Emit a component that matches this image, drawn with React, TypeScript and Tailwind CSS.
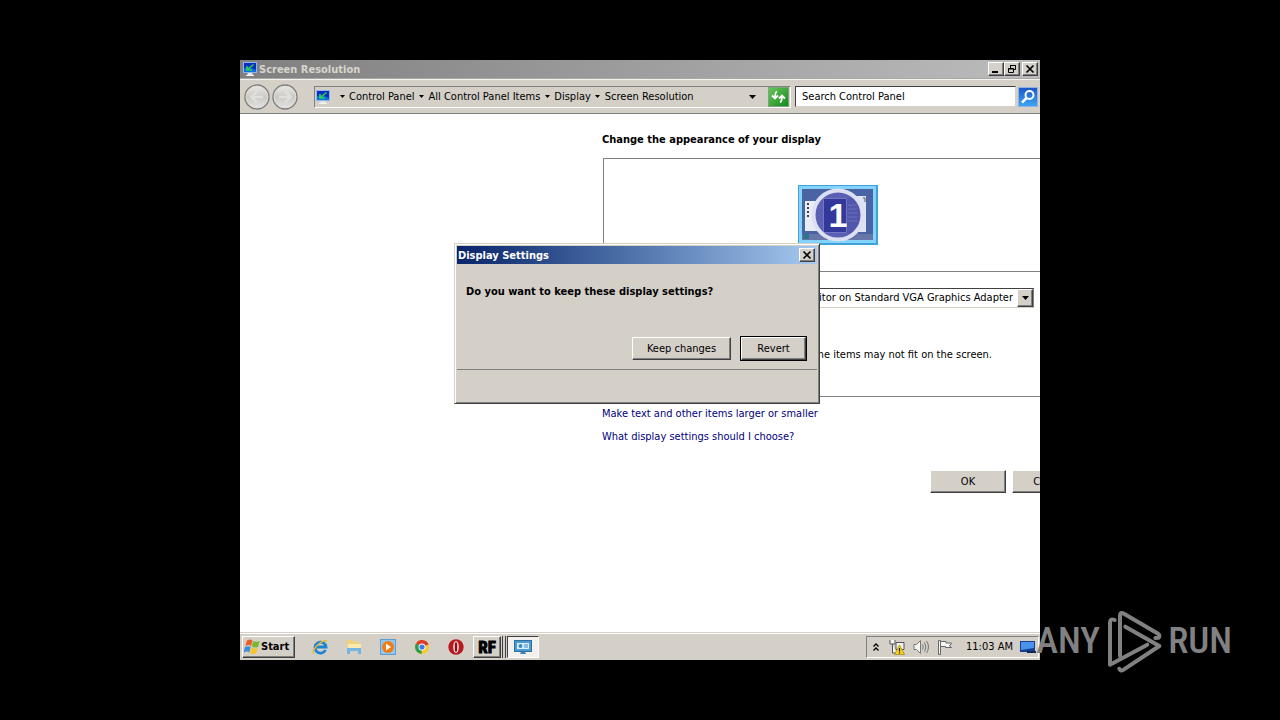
import type { ReactNode } from "react";
import clsx from "clsx";

const raised =
  "bg-[#d4d0c8] border border-t-white border-l-white border-r-[#404040] border-b-[#404040] shadow-[inset_-1px_-1px_0_#808080]";
const sunken = "border border-t-[#808080] border-l-[#808080] border-r-white border-b-white";

const MonitorIcon = () => (
  <svg width="16" height="16" viewBox="0 0 16 16" aria-hidden="true">
    <rect x="1" y="1" width="14" height="11" fill="#8fb4e8" />
    <rect x="2" y="2" width="12" height="9" fill="#0a2fc0" />
    <path d="M2 7l5-1 7 3v2H2z" fill="#0b6fe0" />
    <path d="M11.500 3.500L6 8M5 5v4h5" stroke="#2fd04a" strokeWidth="1.600" fill="none" />
    <path d="M6 12h4l1 2H5z" fill="#e4e8f0" />
    <path d="M4 14h8v1H4z" fill="#f4f4f4" />
  </svg>
);

const DownArrow = () => (
  <svg width="5" height="3" viewBox="0 0 5 3" className="shrink-0" aria-hidden="true">
    <path d="M0 0h5L2.500 3z" fill="#000" />
  </svg>
);

const WideArrow = () => (
  <svg width="7" height="4" viewBox="0 0 7 4" aria-hidden="true">
    <path d="M0 0h7L3.500 4z" />
  </svg>
);

const WindowButton = ({ label, children }: { label: string; children: ReactNode }) => (
  <button aria-label={label} className={clsx(raised, "flex h-[14px] w-4 items-center justify-center")}>
    <svg width="10" height="10" viewBox="0 0 10 10" stroke="#000" fill="none" aria-hidden="true">
      {children}
    </svg>
  </button>
);

const CloseGlyph = () => <path d="M1.500 1.500l7 7M8.500 1.500l-7 7" strokeWidth="1.700" />;

const NavButton = ({ label, d }: { label: string; d: string }) => (
  <button aria-label={label} className="h-[26px] w-[26px] rounded-full">
    <svg width="26" height="26" viewBox="0 0 26 26" fill="none" aria-hidden="true">
      <defs>
        <linearGradient id={label} x1="0" y1="0" x2="0" y2="1">
          <stop offset="0" stopColor="#ebeae8" />
          <stop offset=".5" stopColor="#cbc9c5" />
          <stop offset="1" stopColor="#e6e4e0" />
        </linearGradient>
      </defs>
      <circle cx="13" cy="13" r="12" fill={`url(#${label})`} stroke="#7d7b77" strokeWidth="1.300" />
      <circle cx="13" cy="13" r="10.800" stroke="#dfddd9" />
      <path d={d} stroke="#e0dfdc" strokeWidth="2.500" />
    </svg>
  </button>
);

const crumbs = ["Control Panel", "All Control Panel Items", "Display", "Screen Resolution"];

const TitleBar = () => (
  <header className="flex h-[18px] items-center bg-linear-to-r from-[#808080] to-[#bcbcbc] px-0.5">
    <MonitorIcon />
    <h1 className="ml-px flex-1 pt-px font-bold text-[#d8d5ce]">Screen Resolution</h1>
    <WindowButton label="Minimize">
      <path d="M1 8h6" strokeWidth="2" />
    </WindowButton>
    <WindowButton label="Restore">
      <path d="M3.500 4V1.500h5v4H7M3 1.500h6M1.500 4.500h5v4h-5zM1 5h6" />
    </WindowButton>
    <div className="w-0.5" />
    <WindowButton label="Close">
      <CloseGlyph />
    </WindowButton>
  </header>
);

const Toolbar = () => (
  <div className="flex h-[35px] items-center border-t border-b border-t-[#f4f3f0] border-b-[#808080] bg-[#d4d0c8] pr-0.5 pl-1">
    <div className="flex gap-0.5">
      <NavButton label="Back" d="M19 13H8M13 7.500L7.500 13l5.500 5.500" />
      <NavButton label="Forward" d="M7 13h11M13 7.500l5.500 5.500-5.500 5.500" />
    </div>
    <nav className={clsx(sunken, "ml-4 flex h-[22px] flex-1 items-center")}>
      <MonitorIcon />
      <ol className="ml-1 flex flex-1">
        {crumbs.map((crumb) => (
          <li key={crumb} className="flex items-center">
            <span className="flex w-[14px] justify-center">
              <DownArrow />
            </span>
            <a href="#" className="whitespace-nowrap">{crumb}</a>
          </li>
        ))}
      </ol>
      <button aria-label="Recent locations" className="mr-3">
        <WideArrow />
      </button>
      <button aria-label="Refresh" className="mr-px h-5 w-[21px] border border-[#7ba77c] bg-linear-to-br from-[#65c45c] to-[#0b8a1d]">
        <svg width="19" height="18" viewBox="0 0 19 18" fill="none" stroke="#fff" strokeWidth="1.800" aria-hidden="true">
          <path d="M8 3.500Q6 4 6 10M3 7.500L6 10.500 9 7.500M11 14.500q2-1 2-7M10 10.500L13 7.500l3 3" />
        </svg>
      </button>
    </nav>
    <form className="ml-1 flex items-center gap-0.5">
      <input
        aria-label="Search Control Panel"
        defaultValue="Search Control Panel"
        className="h-[21px] w-[221px] border border-t-[#404040] border-r-[#d4d0c8] border-b-[#d4d0c8] border-l-[#404040] bg-white px-1.5 outline-none"
      />
      <button type="button" aria-label="Search" className="h-5 w-5 border border-[#8fb3e0] bg-linear-to-b from-[#1f57c8] to-[#3fa4f4]">
        <svg width="18" height="18" viewBox="0 0 18 18" fill="none" stroke="#fff" strokeWidth="2" aria-hidden="true">
          <circle cx="10.500" cy="7" r="4" />
          <path d="M7.500 10L3 14.500" strokeWidth="2.500" />
        </svg>
      </button>
    </form>
  </div>
);

const DisplayPreview = () => (
  <svg width="80" height="60" viewBox="0 0 80 60" aria-hidden="true">
    <defs>
      <clipPath id="badge">
        <circle cx="40" cy="30" r="24" />
      </clipPath>
    </defs>
    <rect width="80" height="60" fill="#3fa3da" />
    <rect x="1" y="1" width="77" height="57" fill="#84d3fa" />
    <rect x="4" y="4" width="71" height="51" fill="#4a63a5" />
    <rect x="7" y="16" width="22" height="30" fill="#e8ecf5" />
    <path d="M9 19h3M9 23h3M9 27h3M9 31h3" stroke="#444" strokeWidth="2" strokeDasharray="2 1" />
    <rect x="54" y="11" width="14" height="36" fill="#dde3f2" />
    <path d="M65 13h2v4" stroke="#555" fill="none" />
    <rect x="4" y="49" width="71" height="6" fill="#6477a8" />
    <rect x="5" y="49" width="6" height="5" fill="#2d7484" />
    <g clipPath="url(#badge)">
      <path d="M0 0h80v60H0z" fill="#5c60b4" />
      <path d="M25 13h24v35H25z" fill="#34389a" />
      <path d="M49 13h14v35H49z" fill="#5157aa" />
      <path d="M50 20h9M50 24h9M50 28h9M50 32h9M50 36h9" stroke="#6a70bd" />
      <path d="M25.500 13.500h23v34h-23z" stroke="#7277c4" fill="none" />
    </g>
    <circle cx="40" cy="30" r="24.500" fill="none" stroke="#dde0f2" strokeWidth="4" />
    <text x="40" y="42" textAnchor="middle" fontSize="34" fontWeight="bold" fontFamily="Liberation Sans, sans-serif" fill="#fff">
      1
    </text>
  </svg>
);

const Settings = () => (
  <main className="flex-1 overflow-hidden bg-white pt-[18px] pl-[362px]">
    <h2 className="font-bold">Change the appearance of your display</h2>
    <section className="mt-2.5 ml-px border-t border-b border-l border-[#808080] pb-[33px]">
      <div className="h-[113px] border-b border-[#808080] pt-[26px] pl-[194px]">
        <DisplayPreview />
      </div>
      <div className="relative mt-4 mr-1.5 ml-20">
        <select
          aria-label="Display"
          className="block h-5 w-full appearance-none border border-t-[#404040] border-r-[#808080] border-b-[#d4d0c8] border-l-[#404040] bg-white pr-5 text-right outline-none"
        >
          <option>1. Generic Monitor on Standard VGA Graphics Adapter</option>
        </select>
        <span className={clsx(raised, "pointer-events-none absolute top-px right-px flex h-[18px] w-4 items-center justify-center")}>
          <WideArrow />
        </span>
      </div>
      <p className="mt-[39px] pr-12 text-right whitespace-nowrap">Some items may not fit on the screen.</p>
    </section>
    <div className="mt-[9px] flex flex-col items-start gap-[7px] text-[#000080]">
      <a href="#">Make text and other items larger or smaller</a>
      <a href="#">What display settings should I choose?</a>
    </div>
    <div className="mt-[25px] flex gap-1.5 pl-[328px]">
      {["OK", "Cancel"].map((label) => (
        <button key={label} className={clsx(raised, "h-[23px] w-19 shrink-0")}>
          {label}
        </button>
      ))}
    </div>
  </main>
);

const SettingsDialog = () => (
  <div
    role="dialog"
    aria-labelledby="dialog-title"
    className="absolute top-[183px] left-[214px] w-[366px] border border-t-[#d4d0c8] border-r-[#404040] border-b-[#404040] border-l-[#d4d0c8] bg-[#d4d0c8] shadow-[inset_1px_1px_0_#fff,inset_-1px_-1px_0_#808080]"
  >
    <div className="mx-0.5 mt-0.5 flex h-[18px] items-center bg-linear-to-r from-[#0a246a] to-[#a6caf0] pr-0.5 pl-px">
      <h2 id="dialog-title" className="flex-1 pt-px font-bold text-white">Display Settings</h2>
      <WindowButton label="Close dialog">
        <CloseGlyph />
      </WindowButton>
    </div>
    <div className="px-[11px] pt-5 pb-2">
      <p className="font-bold">Do you want to keep these display settings?</p>
      <div className="mt-9 flex items-center justify-end gap-[9px] pr-px">
        <button className={clsx(raised, "h-[23px] w-[99px]")}>Keep changes</button>
        <button className="h-[25px] w-[67px] border border-black">
          <span className={clsx(raised, "flex h-full items-center justify-center")}>Revert</span>
        </button>
      </div>
    </div>
    <div className="mx-0.5 h-[34px] border-t border-[#808080]" />
  </div>
);

const StartFlag = () => (
  <svg width="16" height="16" viewBox="0 0 16 16" aria-hidden="true">
    <path d="M3 1.500q3-2 5.500 0L7 7.200Q5 5 1.300 7z" fill="#e8602c" />
    <path d="M9.200 2q3 1.500 6.500 0L14 8Q11 9.200 7.800 7.600z" fill="#7cb82f" />
    <path d="M1 8Q4 6.300 6.700 8L5.200 13.500Q3 11.500 -.500 13.500z" fill="#3b8ede" />
    <path d="M7.500 8.500q3 1.700 6.200.300L12.200 14.500q-3 1.200-6.200-.500z" fill="#f6c52c" />
  </svg>
);

const quickLaunch = [
  {
    name: "Internet Explorer",
    icon: (
      <>
        <path d="M13.500 11a5.500 5.500 0 1 1 .500-3H4" fill="none" stroke="#1d83d4" strokeWidth="2.800" />
        <path d="M2 14.500C-1 11 10 0 15 2" fill="none" stroke="#e9b72e" strokeWidth="1.500" />
      </>
    ),
  },
  {
    name: "Windows Explorer",
    icon: (
      <>
        <path d="M1 1h6l1 2h6v9H1z" fill="#f0d27a" />
        <path d="M2 5h13v5H2z" fill="#f9e9ae" />
        <path d="M1 15V9h14v6h-3v-3H4v3z" fill="#76b5e2" />
      </>
    ),
  },
  {
    name: "Media Player",
    icon: (
      <>
        <rect x=".500" y=".500" width="15" height="15" fill="#8fc7ef" stroke="#5a9fd4" />
        <circle cx="8" cy="8" r="6" fill="#f07c14" />
        <path d="M6 4.500l5 3.500-5 3.500z" fill="#fff" />
      </>
    ),
  },
  {
    name: "Chrome",
    icon: (
      <>
        <circle cx="8" cy="8" r="7" fill="#f8ca30" />
        <path d="M8 8L2 4.500a7 7 0 0 1 12.500 1z" fill="#dc3c2c" />
        <path d="M8 8L2 4.500A7 7 0 0 0 7.500 15z" fill="#2d9e4c" />
        <circle cx="8" cy="8" r="3.500" fill="#fff" />
        <circle cx="8" cy="8" r="2.600" fill="#3e7be8" />
      </>
    ),
  },
  {
    name: "Opera",
    icon: (
      <>
        <circle cx="8" cy="8" r="7.700" fill="#b51a20" />
        <ellipse cx="8" cy="8" rx="2.800" ry="6" fill="#f6e6e2" />
        <ellipse cx="8" cy="8" rx="1.300" ry="5" fill="#8f1015" />
      </>
    ),
  },
];

const Tray = () => (
  <div className={clsx(sunken, "flex h-[22px] w-[173px] items-center pl-1.5")}>
    <button aria-label="Show hidden icons">
      <svg width="6" height="8" viewBox="0 0 6 8" fill="none" stroke="#000" strokeWidth="1.300" aria-hidden="true">
        <path d="M.500 3.500L3 1l2.500 2.500M.500 7.500L3 5l2.500 2.500" />
      </svg>
    </button>
    <svg className="ml-2.5" width="16" height="16" viewBox="0 0 16 16" aria-hidden="true">
      <path d="M1 1v4h5V1M3.500 5v9h4M7 3.500h8v7H7z" fill="#f2f2f0" stroke="#555" />
      <path d="M10.500 6l5 9.500h-10z" fill="#f6d21c" stroke="#9d8310" strokeWidth=".700" />
      <path d="M10.500 9v3.500M10.500 13.200v1.300" stroke="#222" strokeWidth="1.200" />
    </svg>
    <svg className="ml-2" width="16" height="16" viewBox="0 0 16 16" fill="none" stroke="#777" aria-hidden="true">
      <path d="M1 5.500h2.500L7.500 1.500v13L3.500 10.500H1z" fill="#f4f4f4" />
      <path d="M9.500 5.500q1.500 2.500 0 5M11.500 3.500q3 4.500 0 9M13.500 2q4 6 0 12" />
    </svg>
    <svg className="ml-2" width="16" height="16" viewBox="0 0 16 16" fill="#f8f8f8" stroke="#666" aria-hidden="true">
      <path d="M1.500 1.500h2v14h-2zM3.500 2.500h5.500v1.500h5.500l-2 3 2 1.500H8.500V7.500h-5z" />
    </svg>
    <time className="ml-[13px] whitespace-nowrap">11:03 AM</time>
    <svg className="ml-[7px] shrink-0" width="16" height="14" viewBox="0 0 16 14" aria-hidden="true">
      <path d="M0 1h15v11H0z" fill="#173f8f" />
      <path d="M1 2h13v6L1 10z" fill="#4a93ea" />
      <path d="M7 11h9v2H7z" fill="#0e2757" />
    </svg>
  </div>
);

const Taskbar = () => (
  <footer className="flex h-[28px] items-center border-t border-[#d4d0c8] bg-[#d4d0c8] pt-px pr-px pl-0.5 shadow-[inset_0_1px_0_#fff]">
    <button className={clsx(raised, "flex h-[22px] w-[53px] items-center gap-px pl-px font-bold")}>
      <StartFlag />
      Start
    </button>
    <div className="ml-[17px] flex gap-[18px]">
      {quickLaunch.map(({ name, icon }) => (
        <button key={name} aria-label={name}>
          <svg width="16" height="16" viewBox="0 0 16 16" aria-hidden="true">
            {icon}
          </svg>
        </button>
      ))}
    </div>
    <button
      className={clsx(
        raised,
        "ml-[9px] h-[22px] w-7 text-[17px] font-bold [-webkit-text-stroke:1px_black] [font-family:'Roboto_Condensed','Liberation_Sans',sans-serif]"
      )}
    >
      RF
    </button>
    <span className="h-[22px] w-0.5 border-r border-[#404040]" />
    <span className="h-[22px] w-[3px] border-r border-[#404040]" />
    <button
      aria-label="Screen Resolution"
      className="ml-px flex h-[22px] w-8 items-center justify-center border border-t-[#404040] border-r-white border-b-white border-l-[#404040] bg-[#f2f1ee]"
    >
      <svg width="18" height="16" viewBox="0 0 18 16" aria-hidden="true">
        <rect x=".500" y="1.500" width="17" height="11" fill="#4a9bd0" stroke="#2e6f9f" />
        <rect x="3" y="4" width="12" height="6" fill="#d8eefa" />
        <circle cx="6.500" cy="7" r="2" fill="#3c8bc4" />
        <path d="M10 6h4M10 8h4" stroke="#3c8bc4" />
        <path d="M7 13h4l1 2H6z" fill="#4787ae" />
      </svg>
    </button>
    <div className="flex-1" />
    <Tray />
  </footer>
);

const Watermark = () => (
  <div className="absolute right-12 bottom-[47px] flex items-center text-[37px] leading-[64px] font-medium text-[#818181] [font-family:'Roboto_Condensed','Liberation_Sans',sans-serif]">
    <span>ANY</span>
    <svg className="mr-1.5 ml-2" width="54" height="63" viewBox="0 0 162 189" fill="none" stroke="#818181" strokeWidth="12" strokeLinecap="round" strokeLinejoin="round" aria-hidden="true">
      <path d="M20 30Q6 24 6 38V164L118 104" />
      <path d="M36 138V18Q36 4 48 11L148 70Q158 76 152 83L142 84" />
      <path d="M52 50L154 108L48 178Q36 186 34 176" />
    </svg>
    <span>RUN</span>
  </div>
);

export default function App() {
  return (
    <div className="relative flex min-h-screen flex-col bg-black px-60 py-15 text-[11px] leading-4 text-black [font-family:'DejaVu_Sans_Condensed','DejaVu_Sans',sans-serif]">
      <div className="relative flex flex-1 flex-col overflow-hidden bg-[#d4d0c8]">
        <TitleBar />
        <div className="h-px bg-[#a9a7a3]" />
        <Toolbar />
        <Settings />
        <Taskbar />
        <SettingsDialog />
      </div>
      <Watermark />
    </div>
  );
}
